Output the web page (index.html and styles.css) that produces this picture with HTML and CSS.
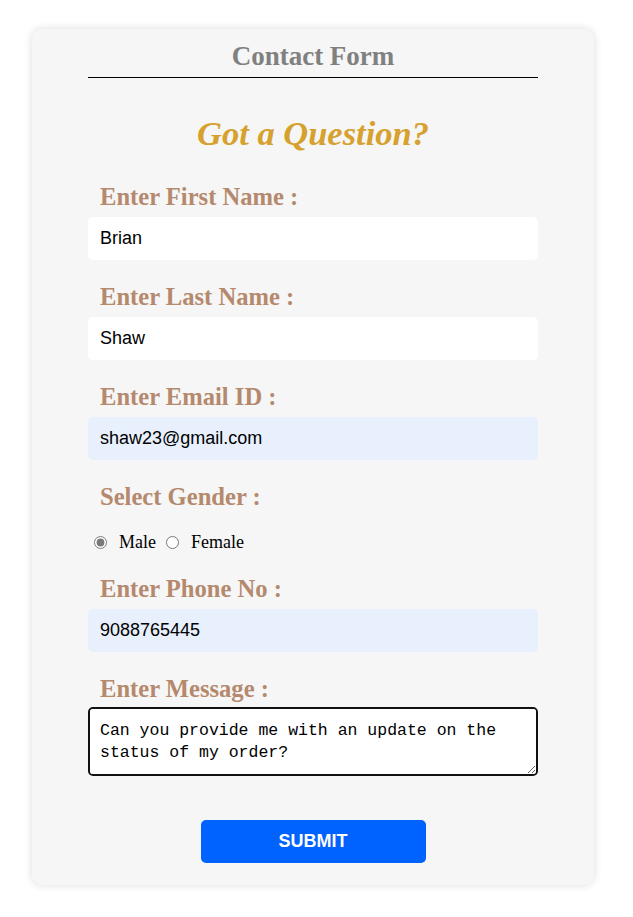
FILE: index.html
```html
<!DOCTYPE html>
<html lang="en">
<head>
<meta charset="utf-8">
<title>Contact Form</title>
<link rel="stylesheet" href="styles.css">
</head>
<body>
<div class="card">
  <h1 class="title">Contact Form</h1>
  <hr class="rule">
  <h2 class="tagline">Got a Question?</h2>
  <form class="form">
    <div class="field">
      <label class="label" for="fn">Enter First Name :</label>
      <input class="input" id="fn" type="text" value="Brian">
    </div>
    <div class="field">
      <label class="label" for="ln">Enter Last Name :</label>
      <input class="input" id="ln" type="text" value="Shaw">
    </div>
    <div class="field">
      <label class="label" for="em">Enter Email ID :</label>
      <input class="input autofill" id="em" type="text" value="shaw23@gmail.com">
    </div>
    <div class="field">
      <span class="label">Select Gender :</span>
      <div class="radios">
        <input class="radio" type="radio" name="g" id="m" checked>
        <label class="radio-label" for="m">Male</label>
        <input class="radio" type="radio" name="g" id="f">
        <label class="radio-label" for="f">Female</label>
      </div>
    </div>
    <div class="field">
      <label class="label" for="ph">Enter Phone No :</label>
      <input class="input autofill" id="ph" type="text" value="9088765445">
    </div>
    <div class="field">
      <label class="label msg-label" for="msg">Enter Message :</label>
      <textarea class="textarea" id="msg">Can you provide me with an update on the status of my order?</textarea>
    </div>
    <div class="actions">
      <button class="submit" type="button">SUBMIT</button>
    </div>
  </form>
</div>
</body>
</html>
```

FILE: styles.css
```css
html, body {
  margin: 0;
  padding: 0;
  background: #ffffff;
}

body {
  padding: 29px 0 30px 32px;
  font-family: "Liberation Serif", "Times New Roman", serif;
}

.card {
  width: 562px;
  box-sizing: border-box;
  padding: 11px 56px 22px;
  background: #f6f6f6;
  border-radius: 10px;
  box-shadow: 0 0 8px rgba(0, 0, 0, 0.14);
}

.title {
  margin: 0;
  font-size: 27px;
  line-height: 32px;
  font-weight: bold;
  color: #808080;
  text-align: center;
}

.rule {
  margin: 5px 0 0;
  border: 0;
  border-top: 1px solid #000;
  height: 0;
}

.tagline {
  margin: 37px 0 0;
  font-size: 34.5px;
  line-height: 36px;
  font-style: italic;
  font-weight: bold;
  color: #d6a12e;
  text-align: center;
}

.form {
  display: flex;
  flex-direction: column;
  margin-top: 32px;
}

.field {
  display: flex;
  flex-direction: column;
  margin-bottom: 23px;
}

.label {
  display: block;
  padding-left: 12px;
  font-size: 24.6px;
  line-height: 28px;
  font-weight: bold;
  color: #b5896d;
  margin-bottom: 6px;
}

.input {
  box-sizing: border-box;
  width: 450px;
  height: 43px;
  margin: 0;
  padding: 0 12px;
  border: 0;
  border-radius: 5px;
  background: #ffffff;
  font-family: "Liberation Sans", Arial, sans-serif;
  font-size: 18px;
  color: #000;
  outline: none;
}

.autofill {
  background: #e8f0fe;
}

.radios {
  display: flex;
  align-items: center;
  height: 20px;
  margin-top: 15px;
  font-size: 18px;
}

.radio {
  width: 13px;
  height: 13px;
  margin: 0 12px 0 6px;
  accent-color: #7a7a7a;
}

.radio + .radio-label + .radio {
  margin-left: 10px;
}

.radio-label {
  color: #000;
  line-height: 20px;
}

.msg-label {
  margin-bottom: 4px;
}

.textarea {
  box-sizing: border-box;
  width: 450px;
  height: 69px;
  margin: 0;
  padding: 11px 10px;
  border: 2px solid #111;
  border-radius: 5px;
  background: #ffffff;
  font-family: "Liberation Mono", "Courier New", monospace;
  font-size: 16.5px;
  line-height: 22px;
  color: #000;
  outline: none;
}

.actions {
  display: flex;
  justify-content: center;
  margin-top: 21px;
}

.submit {
  width: 225px;
  height: 43px;
  border: 0;
  border-radius: 5px;
  background: #0062ff;
  color: #fff;
  font-family: "Liberation Sans", Arial, sans-serif;
  font-weight: bold;
  font-size: 18px;
  cursor: pointer;
}
```
